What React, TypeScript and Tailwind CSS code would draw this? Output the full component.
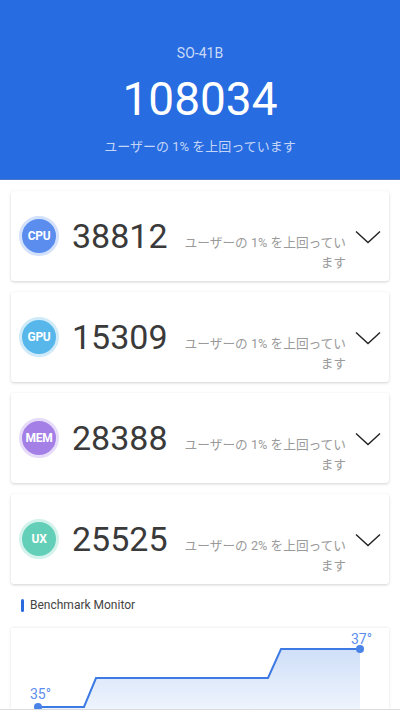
const scores = [
  { label: 'CPU', value: '38812', pct: '1%', fill: 'bg-[#5b8def]', ring: 'border-[#d3e1fb]' },
  { label: 'GPU', value: '15309', pct: '1%', fill: 'bg-[#57b7ea]', ring: 'border-[#cfeaf8]' },
  { label: 'MEM', value: '28388', pct: '1%', fill: 'bg-[#a37fe6]', ring: 'border-[#e6dbf8]' },
  { label: 'UX', value: '25525', pct: '2%', fill: 'bg-[#63cfb9]', ring: 'border-[#d3f2eb]' },
]

function Chevron() {
  return (
    <svg width="26" height="14" viewBox="0 0 26 14" fill="none">
      <path d="M1 1.5 L13 12.5 L25 1.5" stroke="#222" strokeWidth="1.4" />
    </svg>
  )
}

function ScoreCard({ s }: { s: (typeof scores)[number] }) {
  return (
    <div className="h-[90px] bg-white rounded-[3px] shadow-[0_1px_3px_rgba(0,0,0,0.18)] flex items-center pl-[8px] pr-[8px]">
      <div className={`w-[40px] h-[40px] rounded-full border-[3px] ${s.ring} ${s.fill} flex items-center justify-center shrink-0`}>
        <span className="text-white font-bold text-[12px] tracking-tight" style={{ fontFamily: 'Roboto, sans-serif' }}>{s.label}</span>
      </div>
      <div className="ml-[13px] text-[34px] text-[#3a3a3a] leading-none w-[110px] shrink-0" style={{ fontFamily: 'Roboto, sans-serif' }}>
        {s.value}
      </div>
      <div
        className="mt-[34px] w-[164px] shrink-0 text-right text-[12.7px] leading-[20px] text-[#9a9a9a]"
        style={{ fontFamily: 'Roboto, "Noto Sans CJK JP", sans-serif' }}
      >
        ユーザーの {s.pct} を上回ってい<br />ます
      </div>
      <div className="ml-auto mt-[2px]">
        <Chevron />
      </div>
    </div>
  )
}

export default function App() {
  return (
    <div className="w-[400px] h-[720px] overflow-hidden bg-white" style={{ fontFamily: 'Roboto, "Noto Sans CJK JP", sans-serif' }}>
      <div className="h-[180px] bg-[#276ce0] border-b border-[#4a78c4] flex flex-col items-center text-white">
        <div className="mt-[44px] text-[14px] text-[#c9daf8] leading-[18px]">SO-41B</div>
        <div className="mt-[12px] text-[46px] leading-[50px]">108034</div>
        <div className="mt-[14px] text-[13px] text-[#c3d6f8] leading-[18px]" style={{ fontFamily: 'Roboto, "Noto Sans CJK JP", sans-serif' }}>
          ユーザーの 1% を上回っています
        </div>
      </div>

      <div className="px-[11px] pt-[11px] flex flex-col gap-[11px]">
        {scores.map((s) => (
          <ScoreCard key={s.label} s={s} />
        ))}
      </div>

      <div className="mt-[12px] px-[21px] flex items-center gap-[6px]">
        <div className="w-[3px] h-[13px] bg-[#2a6be0] rounded-sm" />
        <span className="text-[12px] text-[#444]">Benchmark Monitor</span>
      </div>

      <div className="mt-[14px] mx-[11px] h-[81px] bg-white shadow-[0_0_3px_rgba(0,0,0,0.12)] overflow-hidden">
        <svg width="378" height="81" viewBox="0 0 378 81">
          <defs>
            <linearGradient id="g" x1="0" y1="0" x2="0" y2="1">
              <stop offset="0" stopColor="#cfdff8" />
              <stop offset="1" stopColor="#eef4fd" />
            </linearGradient>
          </defs>
          <path d="M27 79 L73 79 L85 50 L257 50 L270 21 L349 21 L349 81 L27 81 Z" fill="url(#g)" />
          <path d="M27 79 L73 79 L85 50 L257 50 L270 21 L349 21" fill="none" stroke="#3d7ae3" strokeWidth="2" />
          <circle cx="27" cy="79" r="4" fill="#4a84e8" />
          <circle cx="349" cy="21" r="4" fill="#4a84e8" />
          <text x="19" y="71" fontSize="14" fill="#5b8def" fontFamily="Roboto, sans-serif">35°</text>
          <text x="340" y="16" fontSize="14" fill="#5b8def" fontFamily="Roboto, sans-serif">37°</text>
        </svg>
      </div>
      <div className="border-t border-[#dcdcdc] h-[20px] bg-white" />
    </div>
  )
}
